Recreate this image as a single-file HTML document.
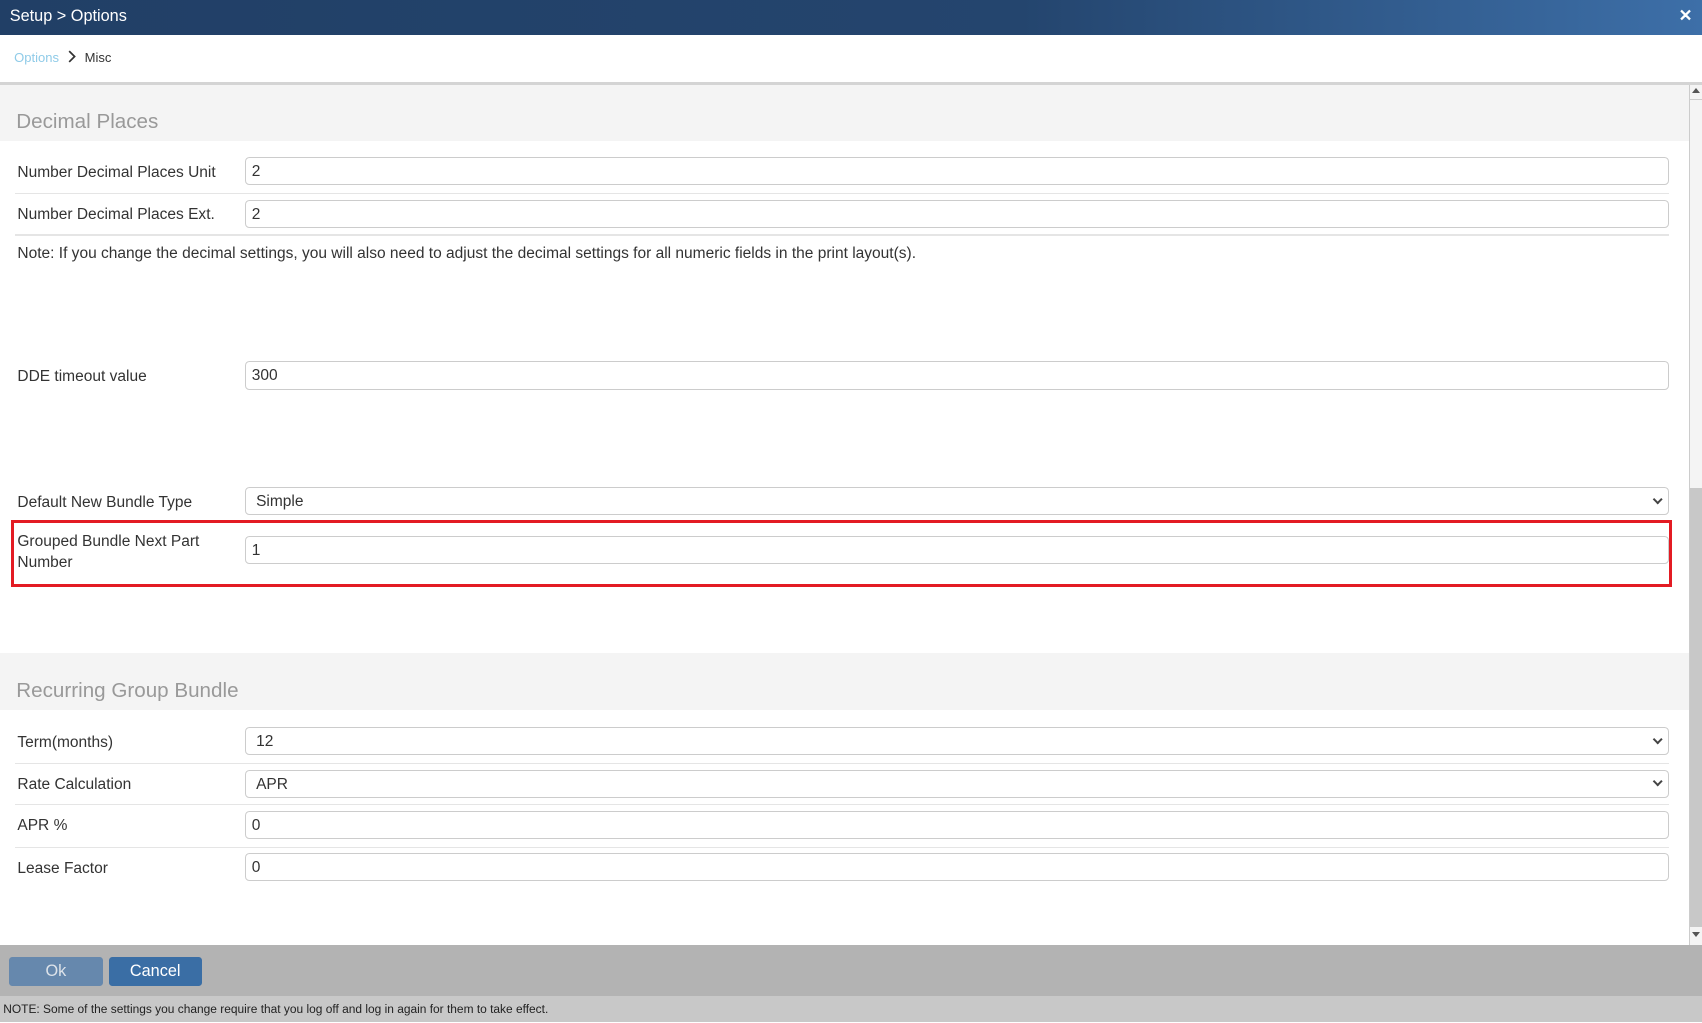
<!DOCTYPE html>
<html><head><meta charset="utf-8"><style>
html,body{margin:0;padding:0;overflow:hidden;background:#fff}
body{width:1702px;height:1023px}
#w{zoom:1.08546;width:1568px;height:942px;position:relative;font-family:"Liberation Sans",Arial,sans-serif;color:#333}
.a{position:absolute}
.hdr{left:0;top:0;width:1568px;height:32px;background:linear-gradient(90deg,#213f66 0%,#24456e 60%,#3d6fa8 100%);color:#fff;font-size:15px;line-height:30px}
.lbl{font-size:14.3px;color:#333;left:16px}
.inp{left:226px;width:1310px;height:24px;border:1px solid #ccc;border-radius:4px;background:#fff;font-size:14.3px;line-height:26px;text-indent:5px;color:#333}
.sel{text-indent:9px}
.sel:after{content:"";position:absolute;right:6px;top:7px;width:5px;height:5px;border-right:2px solid #444;border-bottom:2px solid #444;transform:rotate(45deg)}
.sep{left:14px;width:1524px;height:1px;background:#e5e5e5}
.sec{left:0;width:1556px;height:52px;background:#f4f4f4}
.sec span{position:absolute;left:15px;top:23px;font-size:19px;color:#999}
</style></head><body><div id="w">
<div class="a hdr"><span style="margin-left:9px">Setup &gt; Options</span>
<span class="a" style="right:9px;top:0;font-weight:bold;font-size:15px">✕</span></div>
<div class="a" style="left:13px;top:46px;font-size:12px;color:#8fcbe8">Options</div>
<svg class="a" style="left:62px;top:46px" width="10" height="12"><path d="M2 1 L7 6 L2 11" stroke="#333" stroke-width="1.6" fill="none"/></svg>
<div class="a" style="left:78px;top:46px;font-size:12px;color:#333">Misc</div>
<div class="a" style="left:0;top:76px;width:1568px;height:2px;background:#d4d4d4"></div>

<div class="a sec" style="top:78px"><span>Decimal Places</span></div>
<div class="a lbl" style="top:151px">Number Decimal Places Unit</div>
<div class="a inp" style="top:145px">2</div>
<div class="a sep" style="top:178px"></div>
<div class="a lbl" style="top:190px">Number Decimal Places Ext.</div>
<div class="a inp" style="top:184px">2</div>
<div class="a sep" style="top:216px"></div>
<div class="a lbl" style="top:226px">Note: If you change the decimal settings, you will also need to adjust the decimal settings for all numeric fields in the print layout(s).</div>
<div class="a lbl" style="top:339px">DDE timeout value</div>
<div class="a inp" style="top:333px">300</div>
<div class="a lbl" style="top:455px">Default New Bundle Type</div>
<div class="a inp sel" style="top:449px">Simple</div>
<div class="a" style="left:10px;top:479px;width:1525px;height:56px;border:3px solid #e31b23"></div>
<div class="a lbl" style="top:489px;line-height:20px">Grouped Bundle Next Part<br>Number</div>
<div class="a inp" style="top:494px">1</div>

<div class="a sec" style="top:602px"><span style="top:24px">Recurring Group Bundle</span></div>
<div class="a lbl" style="top:676px">Term(months)</div>
<div class="a inp sel" style="top:670px">12</div>
<div class="a sep" style="top:703px"></div>
<div class="a lbl" style="top:715px">Rate Calculation</div>
<div class="a inp sel" style="top:709px">APR</div>
<div class="a sep" style="top:741px"></div>
<div class="a lbl" style="top:753px">APR %</div>
<div class="a inp" style="top:747px">0</div>
<div class="a sep" style="top:780px"></div>
<div class="a lbl" style="top:792px">Lease Factor</div>
<div class="a inp" style="top:786px">0</div>

<div class="a" style="left:1556px;top:78px;width:12px;height:793px;background:#f4f4f4;border-left:1px solid #ccc;box-sizing:border-box"></div>
<div class="a" style="left:1557px;top:450px;width:11px;height:404px;background:#c8c8c8"></div>
<div class="a" style="left:1559px;top:81px;width:0;height:0;border-left:4px solid transparent;border-right:4px solid transparent;border-bottom:5px solid #555"></div>
<div class="a" style="left:1557px;top:91px;width:11px;height:1px;background:#ccc"></div>
<div class="a" style="left:1559px;top:859px;width:0;height:0;border-left:4px solid transparent;border-right:4px solid transparent;border-top:5px solid #555"></div>

<div class="a" style="left:0;top:871px;width:1568px;height:47px;background:#b3b3b3"></div>
<div class="a" style="left:8px;top:882px;width:87px;height:26px;background:#6688ad;border-radius:3px;color:#dde3ea;font-size:15px;text-align:center;line-height:27px">Ok</div>
<div class="a" style="left:100px;top:882px;width:86px;height:26px;background:#3a6ea5;border-radius:3px;color:#fff;font-size:15px;text-align:center;line-height:27px">Cancel</div>
<div class="a" style="left:0;top:918px;width:1568px;height:24px;background:#c8c8c8;font-size:11px;line-height:25px;color:#222"><span style="margin-left:3px">NOTE: Some of the settings you change require that you log off and log in again for them to take effect.</span></div>
</div></body></html>
